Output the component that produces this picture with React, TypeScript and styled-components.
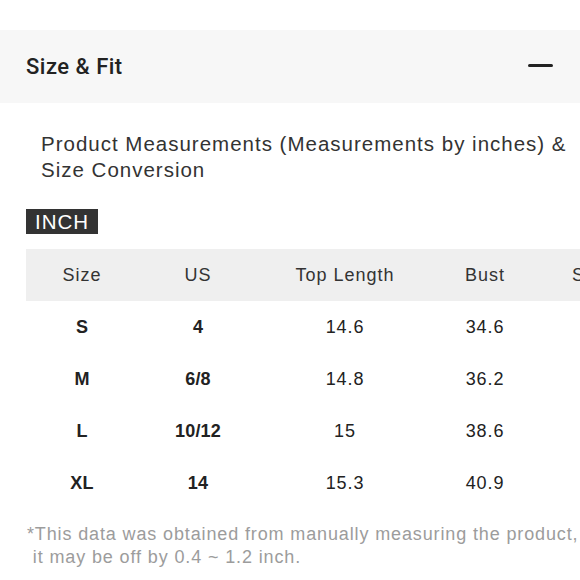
import React from "react";
import styled, { createGlobalStyle } from "styled-components";

const Global = createGlobalStyle`
  html, body { margin: 0; padding: 0; background: #fff; overflow: hidden; }
  body { font-family: "Liberation Sans", Arial, sans-serif; color: #333; }
`;

const Page = styled.div`
  width: 580px;
  height: 580px;
  overflow: hidden;
  padding-top: 30px;
  box-sizing: border-box;
`;

const Header = styled.div`
  height: 73px;
  background: #f7f7f7;
  display: flex;
  align-items: center;
  justify-content: space-between;
  padding: 0 27px 0 26px;
`;

const Title = styled.h2`
  margin: 0;
  font-family: Roboto, "Liberation Sans", sans-serif;
  font-weight: 500;
  font-size: 22px;
  color: #222;
  letter-spacing: 0.5px;
`;

const Minus = styled.span`
  display: block;
  width: 25px;
  height: 3px;
  border-radius: 2px;
  background: #222;
  margin-top: -3px;
`;

const Body = styled.div`
  padding: 0 0 0 26px;
`;

const Intro = styled.p`
  margin: 28px 0 0 15px;
  font-size: 20.5px;
  letter-spacing: 1px;
  line-height: 26px;
  color: #333;
  width: 539px;
`;

const Badge = styled.span`
  display: inline-block;
  margin-top: 26px;
  background: #333;
  color: #fff;
  font-size: 20.5px;
  letter-spacing: 1px;
  line-height: 25px;
  padding: 0 9px 0 9px;
`;

const Table = styled.table`
  margin-top: 15px;
  border-collapse: collapse;
  table-layout: fixed;
  width: 660px;
`;

const HeadRow = styled.tr`
  background: #efefef;
`;

const Th = styled.th`
  height: 52px;
  padding: 0;
  font-weight: 400;
  font-size: 18px;
  letter-spacing: 1px;
  color: #333;
  text-align: center;
  white-space: nowrap;
`;

const Td = styled.td<{ $bold?: boolean }>`
  height: 52px;
  padding: 0;
  font-size: 18px;
  letter-spacing: ${(p) => (p.$bold ? "0.2px" : "0.9px")};
  color: #222;
  font-weight: ${(p) => (p.$bold ? 700 : 400)};
  text-align: center;
  white-space: nowrap;
`;

const Note = styled.p`
  margin: 14px 0 0 1px;
  font-size: 18px;
  letter-spacing: 0.87px;
  line-height: 23px;
  color: #9c9c9c;
  white-space: pre;
`;

const cols = [112, 120, 174, 106, 148];
const headers = ["Size", "US", "Top Length", "Bust", "Shoulder"];
const rows = [
  ["S", "4", "14.6", "34.6", "13.4"],
  ["M", "6/8", "14.8", "36.2", "13.8"],
  ["L", "10/12", "15", "38.6", "14.4"],
  ["XL", "14", "15.3", "40.9", "15"],
];

export default function App() {
  return (
    <>
      <Global />
      <Page>
        <Header>
          <Title>Size &amp; Fit</Title>
          <Minus />
        </Header>
        <Body>
          <Intro>
            Product Measurements (Measurements by inches) &amp; Size Conversion
          </Intro>
          <Badge>INCH</Badge>
          <Table>
            <colgroup>
              {cols.map((w, i) => (
                <col key={i} style={{ width: w }} />
              ))}
            </colgroup>
            <thead>
              <HeadRow>
                {headers.map((h) => (
                  <Th key={h}>{h}</Th>
                ))}
              </HeadRow>
            </thead>
            <tbody>
              {rows.map((r) => (
                <tr key={r[0]}>
                  {r.map((c, i) => (
                    <Td key={i} $bold={i < 2}>
                      {c}
                    </Td>
                  ))}
                </tr>
              ))}
            </tbody>
          </Table>
          <Note>
            {"*This data was obtained from manually measuring the product,\n it may be off by 0.4 ~ 1.2 inch."}
          </Note>
        </Body>
      </Page>
    </>
  );
}
